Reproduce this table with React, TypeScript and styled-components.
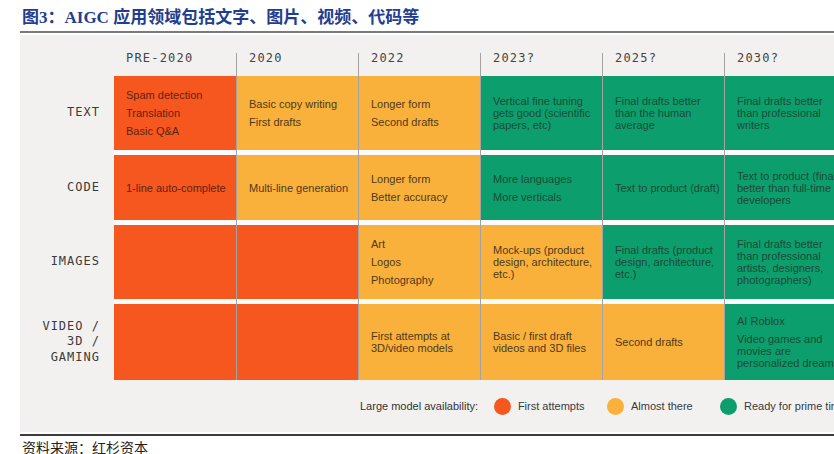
import React from "react";
import styled, { createGlobalStyle } from "styled-components";

const GlobalStyle = createGlobalStyle`
  * { box-sizing: border-box; }
  body {
    margin: 0;
    background: #ffffff;
    overflow: hidden;
    font-family: "Liberation Sans", Arial, sans-serif;
  }
`;

type Tone = "red" | "yellow" | "green";

const tones: Record<Tone, { bg: string; fg: string }> = {
  red: { bg: "#f5571f", fg: "#5e2412" },
  yellow: { bg: "#f9b13b", fg: "#4e3a1c" },
  green: { bg: "#0c9e6d", fg: "#1b4b37" },
};

const Page = styled.div`
  width: 834px;
  height: 454px;
  padding-left: 20px;
  overflow: hidden;
`;

const Title = styled.h1`
  margin: 0;
  padding: 6px 0 1px 2px;
  line-height: 24px;
  font-family: "Liberation Serif", "Noto Sans CJK SC", serif;
  font-size: 17px;
  font-weight: 700;
  color: #1f3e8e;
  border-bottom: 2px solid #7a7a7a;
  white-space: nowrap;
`;

const Panel = styled.div`
  margin-top: 2px;
  height: 397px;
  background: #f2f1f0;
  overflow: hidden;
  display: flex;
  flex-direction: column;
`;

const Board = styled.div`
  display: flex;
  height: 345px;
`;

const LabelColumn = styled.div`
  width: 94px;
  flex-shrink: 0;
  padding-top: 41px;
  display: flex;
  flex-direction: column;
  gap: 5px;
`;

const RowLabel = styled.div<{ $h: number }>`
  height: ${({ $h }) => $h}px;
  display: flex;
  align-items: center;
  justify-content: flex-end;
  padding-right: 14px;
  text-align: right;
  font-family: "DejaVu Sans Mono", "Liberation Mono", monospace;
  font-size: 12px;
  letter-spacing: 1px;
  line-height: 15.5px;
  color: #3b3b3b;
  white-space: pre-line;
`;

const Column = styled.div<{ $first?: boolean }>`
  width: 122px;
  flex-shrink: 0;
  margin-top: 18px;
  display: flex;
  flex-direction: column;
  border-left: ${({ $first }) => ($first ? "none" : "1px solid rgba(0,0,0,0.32)")};
`;

const Year = styled.div`
  height: 23px;
  padding-left: 12px;
  font-family: "DejaVu Sans Mono", "Liberation Mono", monospace;
  font-size: 12px;
  letter-spacing: 1.2px;
  line-height: 10px;
  color: #454545;
`;

const Body = styled.div`
  display: flex;
  flex-direction: column;
  gap: 5px;
  background: #fbfbfb;
`;

const Cell = styled.div<{ $tone: Tone; $h: number }>`
  height: ${({ $h }) => $h}px;
  background: ${({ $tone }) => tones[$tone].bg};
  color: ${({ $tone }) => tones[$tone].fg};
  padding: 0 4px 0 12px;
  display: flex;
  flex-direction: column;
  justify-content: center;
  gap: 6px;
  font-size: 11px;
  line-height: 12px;
`;

const Item = styled.div`
  white-space: pre-line;
`;

const Legend = styled.div`
  height: 52px;
  display: flex;
  align-items: center;
  padding-left: 340px;
  font-size: 11px;
  color: #333;
  white-space: nowrap;
`;

const LegendLabel = styled.div`
  width: 135px;
`;

const LegendItem = styled.div`
  width: 114px;
  display: flex;
  align-items: center;
  gap: 7px;
  color: #3a3a3a;
`;

const Dot = styled.span<{ $tone: Tone }>`
  width: 17px;
  height: 17px;
  border-radius: 50%;
  flex-shrink: 0;
  background: ${({ $tone }) => tones[$tone].bg};
`;

const Rule = styled.div`
  margin-top: 2px;
  height: 2px;
  background: #3c3c3c;
`;

const Source = styled.div`
  padding-left: 2px;
  line-height: 22px;
  font-family: "Noto Sans CJK SC", serif;
  font-size: 14px;
  color: #222;
`;

const rows = [
  { label: "TEXT", h: 74 },
  { label: "CODE", h: 65 },
  { label: "IMAGES", h: 74 },
  { label: "VIDEO /\n3D /\nGAMING", h: 76 },
];

const columns: { year: string; cells: { tone: Tone; items: string[] }[] }[] = [
  {
    year: "PRE-2020",
    cells: [
      { tone: "red", items: ["Spam detection", "Translation", "Basic Q&A"] },
      { tone: "red", items: ["1-line auto-complete"] },
      { tone: "red", items: [] },
      { tone: "red", items: [] },
    ],
  },
  {
    year: "2020",
    cells: [
      { tone: "yellow", items: ["Basic copy writing", "First drafts"] },
      { tone: "yellow", items: ["Multi-line generation"] },
      { tone: "red", items: [] },
      { tone: "red", items: [] },
    ],
  },
  {
    year: "2022",
    cells: [
      { tone: "yellow", items: ["Longer form", "Second drafts"] },
      { tone: "yellow", items: ["Longer form", "Better accuracy"] },
      { tone: "yellow", items: ["Art", "Logos", "Photography"] },
      { tone: "yellow", items: ["First attempts at\n3D/video models"] },
    ],
  },
  {
    year: "2023?",
    cells: [
      { tone: "green", items: ["Vertical fine tuning\ngets good (scientific\npapers, etc)"] },
      { tone: "green", items: ["More languages", "More verticals"] },
      { tone: "yellow", items: ["Mock-ups (product\ndesign, architecture,\netc.)"] },
      { tone: "yellow", items: ["Basic / first draft\nvideos and 3D files"] },
    ],
  },
  {
    year: "2025?",
    cells: [
      { tone: "green", items: ["Final drafts better\nthan the human\naverage"] },
      { tone: "green", items: ["Text to product (draft)"] },
      { tone: "green", items: ["Final drafts (product\ndesign, architecture,\netc.)"] },
      { tone: "yellow", items: ["Second drafts"] },
    ],
  },
  {
    year: "2030?",
    cells: [
      { tone: "green", items: ["Final drafts better\nthan professional\nwriters"] },
      { tone: "green", items: ["Text to product (final)\nbetter than full-time\ndevelopers"] },
      {
        tone: "green",
        items: ["Final drafts better\nthan professional\nartists, designers,\nphotographers)"],
      },
      { tone: "green", items: ["AI Roblox", "Video games and\nmovies are\npersonalized dreams"] },
    ],
  },
];

const App: React.FC = () => {
  return (
    <Page>
      <GlobalStyle />
      <Title>图3：AIGC 应用领域包括文字、图片、视频、代码等</Title>
      <Panel>
        <Board>
          <LabelColumn>
            {rows.map((r) => (
              <RowLabel key={r.label} $h={r.h}>
                {r.label}
              </RowLabel>
            ))}
          </LabelColumn>
          {columns.map((col, i) => (
            <Column key={col.year} $first={i === 0}>
              <Year>{col.year}</Year>
              <Body>
                {col.cells.map((cell, j) => (
                  <Cell key={j} $tone={cell.tone} $h={rows[j].h}>
                    {cell.items.map((t) => (
                      <Item key={t}>{t}</Item>
                    ))}
                  </Cell>
                ))}
              </Body>
            </Column>
          ))}
        </Board>
        <Legend>
          <LegendLabel>Large model availability:</LegendLabel>
          <LegendItem>
            <Dot $tone="red" />
            First attempts
          </LegendItem>
          <LegendItem>
            <Dot $tone="yellow" />
            Almost there
          </LegendItem>
          <LegendItem>
            <Dot $tone="green" />
            Ready for prime time
          </LegendItem>
        </Legend>
      </Panel>
      <Rule />
      <Source>资料来源：红杉资本</Source>
    </Page>
  );
};

export default App;
